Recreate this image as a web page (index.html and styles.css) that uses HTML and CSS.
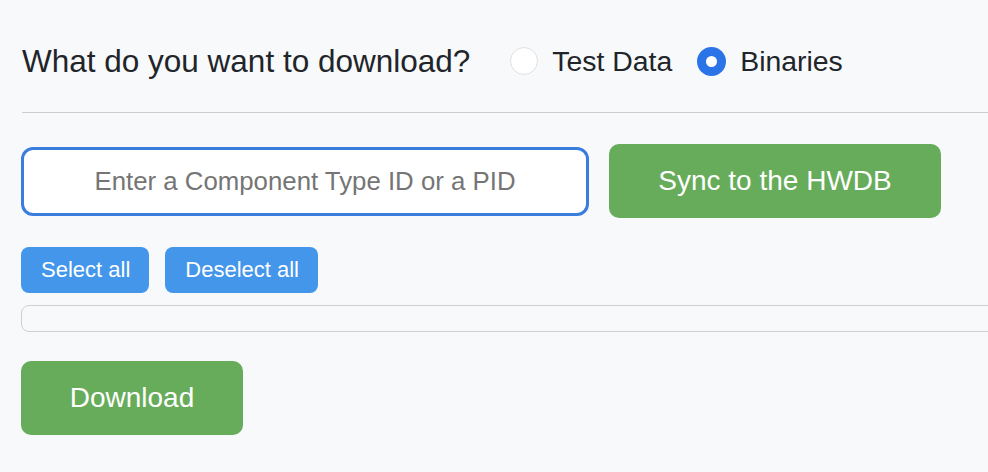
FILE: index.html
```html
<!DOCTYPE html>
<html>
<head>
<meta charset="utf-8">
<link rel="stylesheet" href="styles.css">
</head>
<body>
<div class="page">
  <div class="question">
    <span class="title">What do you want to download?</span>
    <label class="option"><span class="radio"></span><span class="label">Test Data</span></label>
    <label class="option"><span class="radio checked"></span><span class="label">Binaries</span></label>
  </div>
  <div class="rule"></div>
  <div class="search-row">
    <div class="search"><span class="placeholder">Enter a Component Type ID or a PID</span></div>
    <button class="btn-green sync">Sync to the HWDB</button>
  </div>
  <div class="select-row">
    <button class="btn-blue">Select all</button>
    <button class="btn-blue">Deselect all</button>
  </div>
  <div class="list-box"></div>
  <button class="btn-green download">Download</button>
</div>
</body>
</html>
```
FILE: styles.css
```css
html, body {
  margin: 0;
  padding: 0;
  background: #f8f9fb;
  overflow: hidden;
  font-family: "Liberation Sans", Arial, sans-serif;
  color: #212529;
}
.page {
  padding-left: 21px;
  display: flex;
  flex-direction: column;
  align-items: flex-start;
}
.question {
  margin-top: 40px;
  height: 42px;
  display: flex;
  align-items: center;
}
.title {
  font-size: 31.5px;
  margin-left: 1px;
  margin-right: 40px;
}
.option {
  display: flex;
  align-items: center;
  margin-right: 25px;
}
.radio {
  width: 28px;
  height: 28px;
  box-sizing: border-box;
  border-radius: 50%;
  background: #fff;
  border: 1px solid #e0e0e0;
  margin-right: 14px;
}
.radio.checked {
  width: 29px;
  height: 29px;
  border: 9.5px solid #2b74e8;
  margin-right: 14px;
}
.label {
  font-size: 28.4px;
}
.rule {
  align-self: stretch;
  margin-left: 1px;
  margin-top: 30px;
  height: 1px;
  background: #cccccc;
}
.search-row {
  margin-top: 31px;
  display: flex;
  align-items: center;
  gap: 20px;
}
.search {
  width: 568px;
  height: 69px;
  box-sizing: border-box;
  border: 3px solid #3b7ddd;
  border-radius: 12px;
  background: #fff;
  display: flex;
  align-items: center;
  justify-content: center;
}
.placeholder {
  font-size: 25.8px;
  color: #757575;
}
button {
  font-family: "Liberation Sans", Arial, sans-serif;
  border: none;
  color: #fff;
  cursor: pointer;
  padding: 0;
}
.btn-green {
  background: #67ac5b;
  border-radius: 10px;
  font-size: 28px;
}
.sync {
  width: 332px;
  height: 74px;
}
.select-row {
  margin-top: 29px;
  display: flex;
  gap: 16px;
}
.btn-blue {
  background: #4396ea;
  border-radius: 8px;
  height: 46px;
  font-size: 22px;
  padding: 0 19px 0 20px;
}
.list-box {
  margin-top: 12px;
  align-self: stretch;
  margin-right: -30px;
  height: 27px;
  box-sizing: border-box;
  border: 1px solid #cfcfcf;
  border-radius: 8px;
}
.download {
  margin-top: 29px;
  width: 222px;
  height: 74px;
}
```
